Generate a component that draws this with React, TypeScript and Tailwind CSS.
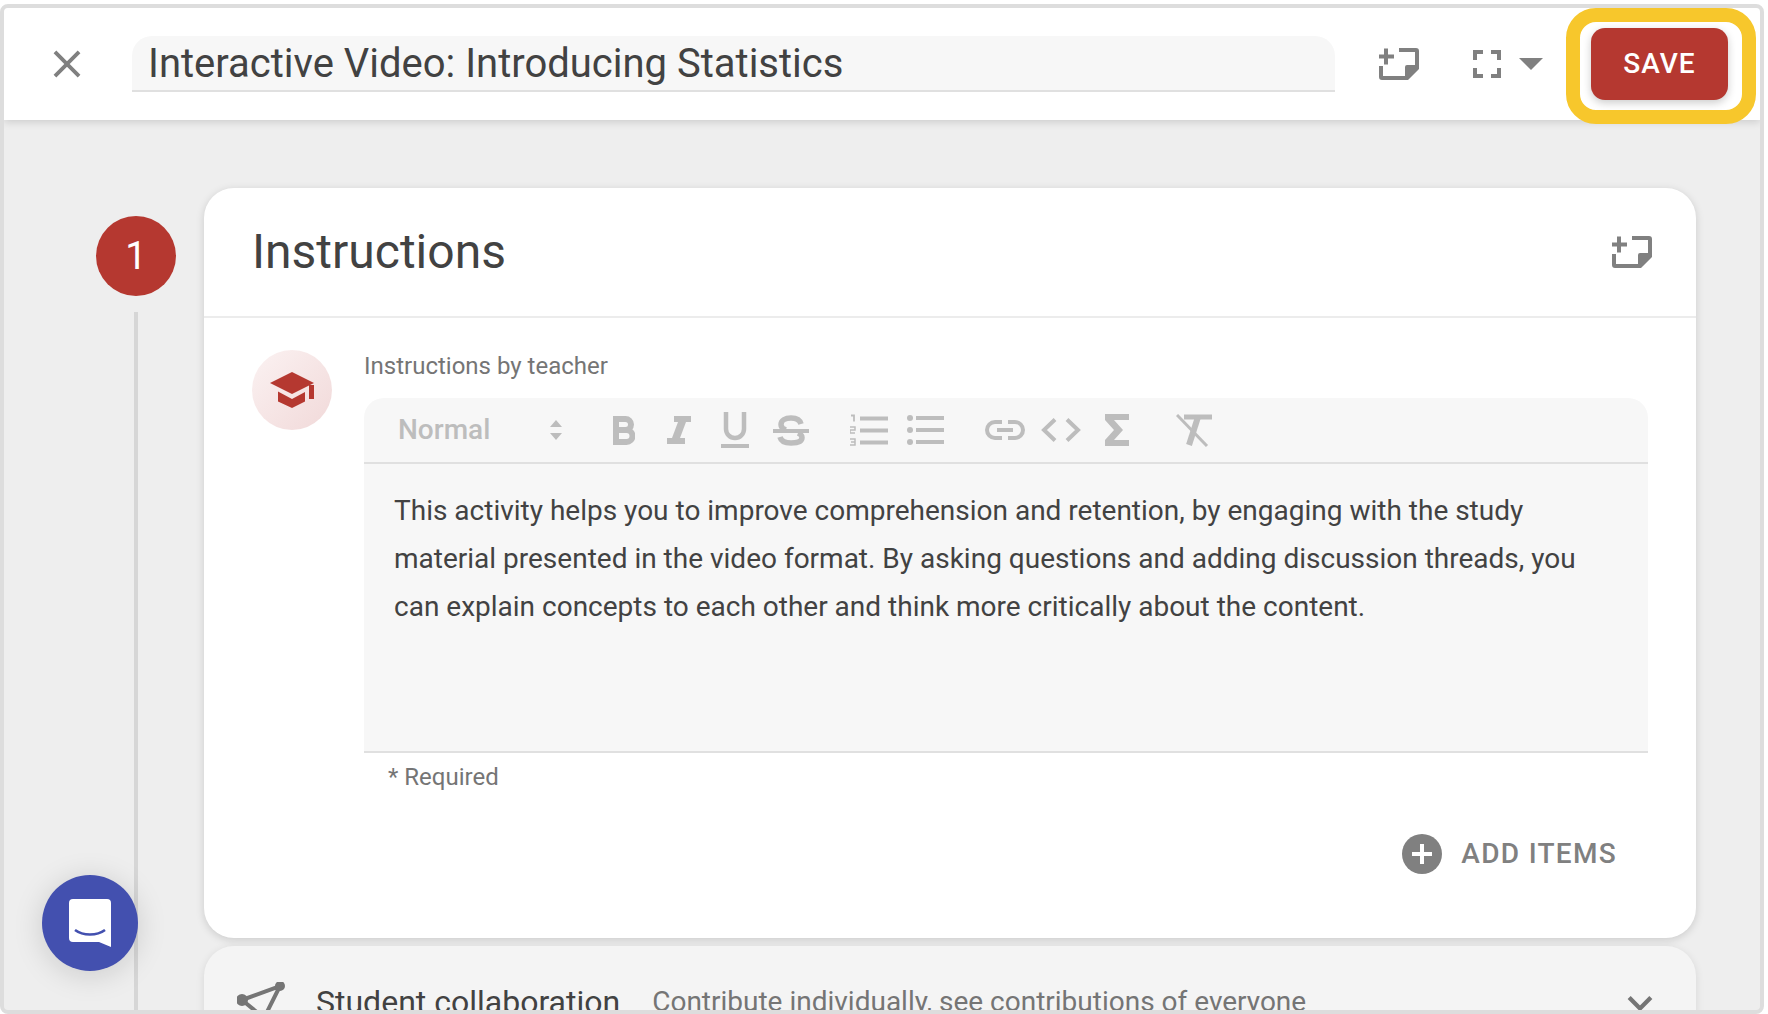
import { MdClose } from "react-icons/md";

const NoteAdd = ({ className }: { className: string }) => (
  <svg viewBox="0 0 40 32" className={className} fill="#808080">
    <rect x="5" y="0.5" width="4" height="16" />
    <rect x="0" y="6.5" width="15" height="4" />
    <path d="M20 0h17a3 3 0 0 1 3 3v18L29 32H3a3 3 0 0 1-3-3V18h4v10h22V19a2 2 0 0 1 2-2h8V4H20z" />
    <path d="M30 21h6l-6 7z" />
  </svg>
);

const Fullscreen = () => (
  <svg viewBox="0 0 28 28" className="w-[28px] h-[28px]" fill="none" stroke="#808080" strokeWidth="4">
    <path d="M2 10V2h8M18 2h8v8M26 18v8h-8M10 26H2v-8" />
  </svg>
);

const CapIcon = () => (
  <svg viewBox="0 0 44 36" className="w-[44px] h-[36px]" fill="#b53830">
    <path d="M22 0 44 11 22 22 0 11z" />
    <path d="M8 19.5 22 27 35 20v9.5L22 36 8 29.5z" />
    <rect x="39" y="13" width="5" height="14" />
  </svg>
);

const Toolbar = () => (
  <div className="h-[66px] flex items-center pl-[34px] border-b-2 border-[#e0e0e0]">
    <span className="w-[152px] text-[28px] font-medium text-[#bdbdbd]">Normal</span>
    <svg viewBox="0 0 12 20" className="w-[12px] h-[20px]" fill="#bdbdbd">
      <path d="M6 0l6 7H0zM6 20l-6-7h12z" />
    </svg>
    {/* bold */}
    <svg viewBox="0 0 22 29" className="ml-[51px] w-[22px] h-[29px]" fill="none" stroke="#bdbdbd" strokeWidth="6">
      <path d="M3 14h9.500a5.500 5.500 0 0 0 0-11H3v23h10.500a6 6 0 0 0 0-12" />
    </svg>
    {/* italic */}
    <svg viewBox="0 0 24 28" className="ml-[32px] w-[24px] h-[28px]" fill="#bdbdbd">
      <path d="M7 0h17v6h-5l-6 16h5v6H0v-6h5l6-16H7z" />
    </svg>
    {/* underline */}
    <svg viewBox="0 0 28 36" className="ml-[30px] w-[28px] h-[36px]" fill="none" stroke="#bdbdbd">
      <path d="M5 0v17a9 9 0 0 0 18 0V0" strokeWidth="4.500" />
      <path d="M0 34h28" strokeWidth="4" />
    </svg>
    {/* strike */}
    <svg viewBox="0 0 36 31" className="ml-[24px] w-[36px] h-[31px]" fill="none" stroke="#bdbdbd">
      <path d="M28 9C27 5 23 3 18 3 12 3 8 5.500 8 9.500c0 2.500 1.500 4.500 5 5.500" strokeWidth="5.500" />
      <path d="M25 18c2.500 1 4 2.500 4 4.500 0 3.500-4 5.500-11 5.500-6 0-10-2-11-6" strokeWidth="5.500" />
      <path d="M0 16h36" strokeWidth="4" />
    </svg>
    {/* ordered list, the small numbers are drawn as marks like the other toolbar glyphs */}
    <svg viewBox="0 0 38 33" className="ml-[41px] w-[38px] h-[33px]" fill="none" stroke="#bdbdbd">
      <path d="M10 4.500h28M10 16.500h28M10 28.500h28" strokeWidth="4" />
      <path d="M1 1.500h3v6" strokeWidth="1.800" />
      <path d="M0 13h5v3H0v3h5" strokeWidth="1.500" />
      <path d="M0 25h5v3H1h4v3H0" strokeWidth="1.500" />
    </svg>
    {/* bullet list */}
    <svg viewBox="0 0 37 30" className="ml-[19px] w-[37px] h-[30px]" fill="#bdbdbd">
      <circle cx="3" cy="3" r="3" />
      <circle cx="3" cy="15" r="3" />
      <circle cx="3" cy="27" r="3" />
      <rect x="9" y="1" width="28" height="4" />
      <rect x="9" y="13" width="28" height="4" />
      <rect x="9" y="25" width="28" height="4" />
    </svg>
    {/* link */}
    <svg viewBox="0 0 40 20" className="ml-[41px] w-[40px] h-[20px]" fill="none" stroke="#bdbdbd" strokeWidth="4">
      <path d="M17 2H10a8 8 0 0 0 0 16h7M23 2h7a8 8 0 0 1 0 16h-7M12 10h16" />
    </svg>
    {/* code */}
    <svg viewBox="0 0 40 24" className="ml-[16px] w-[40px] h-[24px]" fill="none" stroke="#bdbdbd" strokeWidth="4">
      <path d="M14 1.500 3 12l11 10.500M26 1.500 37 12 26 22.500" />
    </svg>
    {/* sum */}
    <svg viewBox="0 0 24 32" className="ml-[24px] w-[24px] h-[32px]" fill="#bdbdbd">
      <path d="M0 0h24v6H9l9 10-9 10h15v6H0v-6l9-10L0 6z" />
    </svg>
    {/* clear format */}
    <svg viewBox="0 0 36 33" className="ml-[47px] w-[36px] h-[33px]" fill="none" stroke="#bdbdbd">
      <path d="M8 3h28" strokeWidth="5" />
      <path d="M22 3l-9 28" strokeWidth="6" />
      <path d="M1 1l30 31" strokeWidth="3" />
    </svg>
  </div>
);

export default function App() {
  const roboto = "font-['Roboto',sans-serif]";

  return (
    <div className={`${roboto} w-[1768px] h-[1014px] bg-white pt-1 overflow-hidden`}>
      <div className="relative w-[1764px] h-[1010px] border-4 border-[#dddddd] rounded-lg overflow-hidden flex flex-col bg-[#eeeeee]">
        {/* top bar */}
        <div className="relative z-10 h-[112px] shrink-0 bg-white flex items-center pl-[48px] shadow-[0_2px_8px_rgba(0,0,0,0.15)]">
          <MdClose className="w-[46px] h-[46px] -mx-[8px] text-[#808080]" />
          <div className="ml-[50px] w-[1203px] h-[56px] flex items-center pl-[16px] pt-[2px] bg-[#f7f7f7] rounded-t-[20px] border-b-2 border-[#e0e0e0]">
            <span className="text-[40px] text-[#424242]">Interactive Video: Introducing Statistics</span>
          </div>
          <NoteAdd className="ml-[44px] w-[40px] h-[32px]" />
          <div className="ml-[54px]">
            <Fullscreen />
          </div>
          <svg viewBox="0 0 24 12" className="ml-[18px] w-[24px] h-[12px]" fill="#808080">
            <path d="M0 0h24L12 12z" />
          </svg>
          <button className="relative ml-[48px] w-[137px] h-[72px] rounded-[14px] bg-[#b53830] text-white text-[28px] font-medium tracking-[1px] shadow-[0_3px_8px_rgba(0,0,0,0.2)]">
            SAVE
            <span className="absolute -left-[25px] -right-[28px] -top-[20px] -bottom-[24px] border-[14px] border-[#f7c72c] rounded-[30px]" />
          </button>
        </div>

        {/* main area */}
        <div className="flex-1 flex pl-[92px] pt-[68px] min-h-0">
          <div className="w-[80px] shrink-0 flex flex-col items-center pt-[28px]">
            <div className="w-[80px] h-[80px] shrink-0 rounded-full bg-[#b53830] text-white text-[38px] flex items-center justify-center">
              1
            </div>
            <div className="mt-[16px] w-1 h-[800px] bg-[#d6d6d6]" />
          </div>

          <div className="ml-[28px] w-[1492px] shrink-0 flex flex-col gap-2">
            <div className="h-[750px] shrink-0 bg-white rounded-[30px] shadow-[0_2px_8px_rgba(0,0,0,0.15)]">
              <div className="h-[130px] flex items-center justify-between pl-[48px] pr-[44px] border-b-2 border-[#ececec]">
                <span className="text-[48px] text-[#424242]">Instructions</span>
                <NoteAdd className="w-[40px] h-[32px]" />
              </div>
              <div className="flex pl-[48px] pt-[32px] gap-8">
                <div className="w-[80px] h-[80px] shrink-0 rounded-full bg-gradient-to-br from-[#fbf2f2] to-[#f1d9d9] flex items-center justify-center">
                  <CapIcon />
                </div>
                <div className="w-[1284px]">
                  <div className="h-[32px] leading-[32px] text-[24px] text-[#757575]">Instructions by teacher</div>
                  <div className="mt-4 h-[355px] bg-[#f7f7f7] rounded-t-[20px] border-b-2 border-[#e0e0e0]">
                    <Toolbar />
                    <div className="pl-[30px] pt-[23px] text-[28px] leading-[48px] text-[#424242]">
                      <div>This activity helps you to improve comprehension and retention, by engaging with the study</div>
                      <div>material presented in the video format. By asking questions and adding discussion threads, you</div>
                      <div>can explain concepts to each other and think more critically about the content.</div>
                    </div>
                  </div>
                  <div className="mt-[8px] pl-[24px] h-[32px] leading-[32px] text-[24px] text-[#757575]">* Required</div>
                  <div className="mt-[40px] flex items-center justify-end pr-[31px] gap-[19px]">
                    <span className="w-[40px] h-[40px] rounded-full bg-[#808080] flex items-center justify-center">
                      <svg viewBox="0 0 20 20" className="w-[20px] h-[20px]" fill="#ffffff">
                        <path d="M8 0h4v8h8v4h-8v8H8v-8H0V8h8z" />
                      </svg>
                    </span>
                    <span className="text-[28px] font-medium tracking-[1.3px] text-[#808080]">ADD ITEMS</span>
                  </div>
                </div>
              </div>
            </div>

            <div className="h-[200px] shrink-0 bg-[#f4f4f4] rounded-[30px] flex items-start pl-[33px] pr-[43px] pt-[36px] shadow-[0_2px_8px_rgba(0,0,0,0.1)]">
              <svg viewBox="0 0 48 40" className="w-[48px] h-[40px] shrink-0" fill="#757575" stroke="#757575" strokeWidth="4">
                <path d="M5 18 43 4 27 36z" fill="none" />
                <circle cx="5" cy="18" r="4" />
                <circle cx="43" cy="4" r="3" />
              </svg>
              <span className="ml-[31px] text-[32px] leading-[40px] text-[#424242]">Student collaboration</span>
              <span className="ml-[32px] text-[28px] leading-[40px] text-[#757575]">Contribute individually, see contributions of everyone</span>
              <svg viewBox="0 0 24 14" className="ml-auto mt-[13px] w-[26px] h-[16px]" fill="none" stroke="#757575" strokeWidth="4">
                <path d="M2 2l10 10L22 2" />
              </svg>
            </div>
          </div>
        </div>

        {/* chat launcher */}
        <button className="absolute z-20 left-[38px] bottom-[39px] w-[96px] h-[96px] rounded-full bg-[#4350af] flex items-center justify-center shadow-[0_4px_30px_rgba(0,0,0,0.15)]">
          <svg viewBox="0 0 42 48" className="w-[42px] h-[48px]">
            <path d="M4 0h34a4 4 0 0 1 4 4v44l-12-5H4a4 4 0 0 1-4-4V4a4 4 0 0 1 4-4z" fill="#ffffff" />
            <path d="M6 31c8 6 22 6 30 0" fill="none" stroke="#4350af" strokeWidth="2.500" />
          </svg>
        </button>
      </div>
    </div>
  );
}
